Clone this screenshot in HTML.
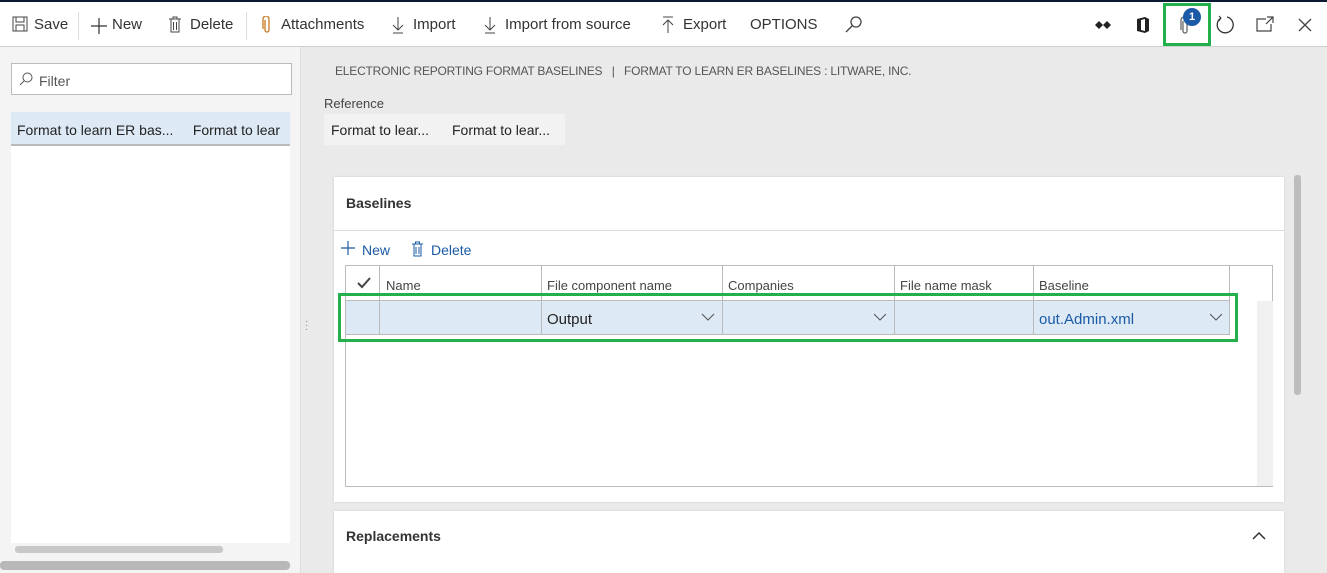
<!DOCTYPE html>
<html><head><style>
*{box-sizing:border-box;margin:0;padding:0}
body{width:1327px;height:573px;overflow:hidden;font-family:"Liberation Sans",sans-serif;background:#eaeaea;position:relative;color:#222}
.a{position:absolute}
.tb{left:0;top:0;width:1327px;height:47px;background:#fff;border-top:2px solid #0b1a33;border-bottom:1px solid #d0d0d0}
.tb span{position:absolute;top:14px;font-size:15px;color:#333}
.sep{position:absolute;top:10px;width:1px;height:28px;background:#ddd}
.lp{left:0;top:47px;width:301px;height:526px;background:#f4f4f4;border-right:1px solid #ddd}
.t{font-size:14px}
.hd{position:absolute;top:12px;font-size:13px;color:#444}
</style></head><body>
<div class="a tb">
<svg class="a" style="left:12px;top:14px" width="16" height="16"><rect x="1" y="1" width="14" height="14" fill="none" stroke="#444"/><rect x="4" y="1" width="8" height="5" fill="none" stroke="#444"/><rect x="4" y="9" width="8" height="6" fill="none" stroke="#444"/></svg>
<span style="left:34px">Save</span><div class="sep" style="left:78px"></div>
<svg class="a" style="left:90px;top:15px" width="18" height="18"><path d="M9 1v16M1 9h16" stroke="#333" stroke-width="1.2"/></svg><span style="left:112px">New</span>
<svg class="a" style="left:168px;top:14px" width="14" height="17"><path d="M1 3h12M5 3V1h4v2M3 3v13h8V3M5.5 6v8M8.5 6v8" fill="none" stroke="#444"/></svg>
<span style="left:190px">Delete</span><div class="sep" style="left:246px"></div>
<svg class="a" style="left:262px;top:14px" width="10" height="18"><path d="M3 4v10a2 2 0 0 0 4 0V3a3 3 0 0 0-6 0v10" fill="none" stroke="#c87a1f" stroke-width="1.3"/></svg>
<span style="left:281px">Attachments</span>
<svg class="a" style="left:392px;top:14px" width="12" height="18"><path d="M6 1v13M1 9l5 5 5-5M1 17h10" fill="none" stroke="#444"/></svg>
<span style="left:413px">Import</span>
<svg class="a" style="left:484px;top:14px" width="12" height="18"><path d="M6 1v13M1 9l5 5 5-5M1 17h10" fill="none" stroke="#444"/></svg>
<span style="left:505px">Import from source</span>
<svg class="a" style="left:662px;top:14px" width="12" height="18"><path d="M6 17V4M1 9l5-5 5 5M1 1h10" fill="none" stroke="#444"/></svg>
<span style="left:683px">Export</span>
<span style="left:750px">OPTIONS</span>
<svg class="a" style="left:845px;top:13px" width="18" height="18"><circle cx="11" cy="7" r="5" fill="none" stroke="#444" stroke-width="1.3"/><path d="M7 11l-6 6" stroke="#444" stroke-width="1.3"/></svg>
<svg class="a" style="left:1095px;top:17px" width="16" height="12"><path d="M4 2l4 4-4 4-4-4zM12 2l4 4-4 4-4-4z" fill="#222"/></svg>
<svg class="a" style="left:1136px;top:14px" width="14" height="18"><path d="M1 3l8-2 4 2v12l-4 2-8-2zM5 4v10l4 1V3z" fill="#222"/></svg>
<div class="a" style="left:1163px;top:1px;width:48px;height:43px;border:3px solid #22b04a"></div>
<svg class="a" style="left:1180px;top:14px" width="10" height="20"><path d="M3 5v10a2 2 0 0 0 4 0V4a3 3 0 0 0-6 0v10" fill="none" stroke="#666" stroke-width="1.3"/></svg>
<div class="a" style="left:1183px;top:6px;width:18px;height:18px;border-radius:50%;background:#1a5aa6;color:#fff;font-size:11px;text-align:center;line-height:18px;font-weight:bold">1</div>
<svg class="a" style="left:1215px;top:13px" width="20" height="20"><path d="M6 3a8 8 0 1 0 6-1" fill="none" stroke="#333" stroke-width="1.3"/><path d="M4 1l2 2-2 3" fill="none" stroke="#333"/></svg>
<svg class="a" style="left:1256px;top:14px" width="18" height="16"><path d="M10 3H1v12h14V8M11 1h6v6M17 1l-7 7" fill="none" stroke="#444" stroke-width="1.2"/></svg>
<svg class="a" style="left:1298px;top:16px" width="14" height="14"><path d="M1 1l12 12M13 1L1 13" stroke="#444" stroke-width="1.3"/></svg>
</div>
<div class="a lp">
<div class="a" style="left:11px;top:16px;width:281px;height:32px;background:#fff;border:1px solid #bbb"></div>
<svg class="a" style="left:19px;top:25px" width="14" height="14"><circle cx="8.5" cy="5.5" r="4.5" fill="none" stroke="#555"/><path d="M5 9l-4 4" stroke="#555"/></svg>
<div class="a t" style="left:39px;top:26px;color:#555">Filter</div>
<div class="a" style="left:11px;top:65px;width:279px;height:34px;background:#dde9f5;border-bottom:2px solid #bbb"></div>
<div class="a t" style="left:17px;top:75px;white-space:nowrap;width:273px;overflow:hidden">Format to learn ER bas...&nbsp;&nbsp;&nbsp;&nbsp;&nbsp;Format to lear</div>
<div class="a" style="left:11px;top:99px;width:279px;height:397px;background:#fff"></div>
<div class="a" style="left:15px;top:499px;width:208px;height:7px;background:#c8c8c8;border-radius:3px"></div>
<div class="a" style="left:0px;top:514px;width:290px;height:9px;background:#b8b8b8;border-radius:4px"></div>
</div>
<div class="a" style="left:305px;top:320px;color:#888;font-size:10px;line-height:4px">·<br>·<br>·</div>
<div class="a" style="left:335px;top:64px;font-size:12px;color:#555;letter-spacing:-0.2px">ELECTRONIC REPORTING FORMAT BASELINES &nbsp;&nbsp;|&nbsp;&nbsp; FORMAT TO LEARN ER BASELINES : LITWARE, INC.</div>
<div class="a" style="left:324px;top:96px;font-size:13px;color:#444">Reference</div>
<div class="a t" style="left:324px;top:114px;width:241px;height:31px;background:#f2f2f2"></div>
<div class="a t" style="left:331px;top:122px">Format to lear...</div>
<div class="a t" style="left:452px;top:122px">Format to lear...</div>
<div class="a" style="left:334px;top:177px;width:950px;height:325px;background:#fff;box-shadow:0 0 2px #ccc">
<div class="a" style="left:12px;top:18px;font-size:14px;font-weight:bold;color:#333">Baselines</div>
<div class="a" style="left:0;top:53px;width:950px;height:1px;background:#ddd"></div>
<svg class="a" style="left:7px;top:64px" width="14" height="14"><path d="M7 0v14M0 7h14" stroke="#1a5aa6" stroke-width="1.2"/></svg>
<div class="a t" style="left:28px;top:65px;color:#1a5aa6">New</div>
<svg class="a" style="left:77px;top:64px" width="13" height="16"><path d="M1 3h11M4.5 3V1h4v2M3 3v12h7V3M5 6v7M8 6v7" fill="none" stroke="#1a5aa6"/></svg>
<div class="a t" style="left:97px;top:65px;color:#1a5aa6">Delete</div>
<div class="a" style="left:11px;top:88px;width:928px;height:222px;border:1px solid #bbb">
<div class="a" style="left:0;top:34px;width:883px;height:35px;background:#dde9f5;border-top:1px solid #bbb;border-bottom:1px solid #bbb"></div>
<div class="a" style="left:33px;top:0;width:1px;height:69px;background:#bbb"></div>
<div class="a" style="left:195px;top:0;width:1px;height:69px;background:#bbb"></div>
<div class="a" style="left:376px;top:0;width:1px;height:69px;background:#bbb"></div>
<div class="a" style="left:548px;top:0;width:1px;height:69px;background:#bbb"></div>
<div class="a" style="left:687px;top:0;width:1px;height:69px;background:#bbb"></div>
<div class="a" style="left:883px;top:0;width:1px;height:69px;background:#bbb"></div>
<svg class="a" style="left:11px;top:11px" width="14" height="12"><path d="M1 6l4 4 8-9" fill="none" stroke="#444" stroke-width="2"/></svg>
<div class="hd" style="left:40px">Name</div>
<div class="hd" style="left:201px">File component name</div>
<div class="hd" style="left:382px">Companies</div>
<div class="hd" style="left:554px">File name mask</div>
<div class="hd" style="left:693px">Baseline</div>
<div class="a t" style="left:201px;top:45px;font-size:15px">Output</div>
<div class="a t" style="left:693px;top:45px;font-size:15px;color:#1a5aa6">out.Admin.xml</div>
<svg class="a" style="left:355px;top:47px" width="14" height="8"><path d="M1 1l6 6 6-6" fill="none" stroke="#555"/></svg>
<svg class="a" style="left:527px;top:47px" width="14" height="8"><path d="M1 1l6 6 6-6" fill="none" stroke="#555"/></svg>
<svg class="a" style="left:863px;top:47px" width="14" height="8"><path d="M1 1l6 6 6-6" fill="none" stroke="#555"/></svg>
<div class="a" style="left:911px;top:35px;width:16px;height:185px;background:#f0f0f0"></div>
</div>
<div class="a" style="left:4px;top:116px;width:900px;height:49px;border:3px solid #22b04a"></div>
</div>
<div class="a" style="left:1294px;top:175px;width:7px;height:220px;background:#bdbdbd;border-radius:3px"></div>
<div class="a" style="left:334px;top:511px;width:950px;height:62px;background:#fff;box-shadow:0 0 2px #ccc">
<div class="a" style="left:12px;top:17px;font-size:14px;font-weight:bold;color:#333">Replacements</div>
<svg class="a" style="left:918px;top:21px" width="14" height="8"><path d="M1 7l6-6 6 6" fill="none" stroke="#333" stroke-width="1.5"/></svg>
</div>
</body></html>
